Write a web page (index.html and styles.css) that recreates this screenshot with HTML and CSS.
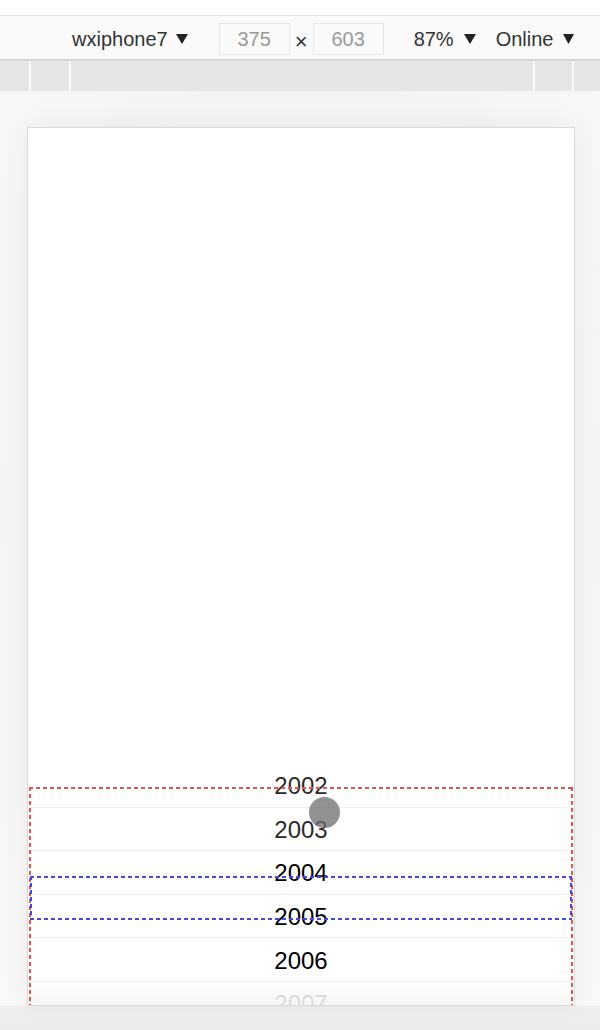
FILE: index.html
```html
<!DOCTYPE html>
<html>
<head>
<meta charset="utf-8">
<link rel="stylesheet" href="styles.css">
</head>
<body>
<div class="topgap"></div>
<div class="toolbar">
  <div class="sel device">wxiphone7 <svg class="tri" width="12" height="10" viewBox="0 0 12 10"><path d="M0 0H12L6 10Z"/></svg></div>
  <div class="dims">
    <div class="box">375</div>
    <span class="times">×</span>
    <div class="box">603</div>
  </div>
  <div class="sel zoomsel">87% <svg class="tri" width="12" height="10" viewBox="0 0 12 10"><path d="M0 0H12L6 10Z"/></svg></div>
  <div class="sel net">Online <svg class="tri" width="11" height="10" viewBox="0 0 11 10"><path d="M0 0H11L5.5 10Z"/></svg></div>
</div>
<div class="strip">
  <div class="seg s1"></div>
  <div class="seg s2"></div>
  <div class="seg s3"></div>
  <div class="seg s4"></div>
  <div class="seg s5"></div>
</div>
<div class="stage">
  <div class="sim">
    <div class="spacer"></div>
    <div class="picker">
      <div class="row first dim">2002</div>
      <div class="row dim">2003</div>
      <div class="row">2004</div>
      <div class="row">2005</div>
      <div class="row">2006</div>
      <div class="row faded">2007</div>
    </div>
    <div class="fade"></div>
    <div class="outline-red"></div>
    <div class="outline-blue"></div>
    <div class="touch"></div>
  </div>
</div>
<div class="bottom"></div>
</body>
</html>
```
FILE: styles.css
```css
* { box-sizing: border-box; }
html, body { margin: 0; padding: 0; }
body {
  width: 600px;
  height: 1030px;
  overflow: hidden;
  font-family: "Liberation Sans", Arial, sans-serif;
  background: #f6f6f6;
}
.topgap { height: 15px; background: #fff; }
.toolbar {
  height: 46px;
  background: #fafafa;
  border-top: 1px solid #e2e2e2;
  border-bottom: 2px solid #d4d4d4;
  display: flex;
  align-items: center;
  padding-left: 72px;
  padding-top: 3px;
  font-size: 20px;
  color: #333;
}
.sel { display: flex; align-items: center; gap: 8px; white-space: nowrap; }
.tri { fill: #222; }
.device { margin-right: 31px; }
.zoomsel { margin-left: 30px; gap: 10px; }
.net { margin-left: 20px; gap: 10px; }
.dims { display: flex; align-items: center; }
.box {
  width: 71px;
  height: 32px;
  border: 1px solid #e6e6e6;
  background: #fafafa;
  color: #999;
  display: flex;
  align-items: center;
  justify-content: center;
  font-size: 20px;
}
.times {
  width: 23px;
  text-align: center;
  font-size: 22px;
  color: #333;
  padding-top: 5px;
}
.strip {
  height: 30px;
  background: #fafafa;
  display: flex;
  gap: 2px;
}
.seg { background: #e6e6e6; height: 100%; }
.s1 { width: 29px; }
.s2 { width: 38px; }
.s3 { width: 462px; }
.s4 { width: 37px; }
.s5 { flex: 1; }
.stage {
  height: 915px;
  padding-top: 36px;
  padding-left: 27px;
  background: radial-gradient(ellipse at 50% 45%, #f3f3f3 60%, #f9f9f9 100%);
}
.sim {
  position: relative;
  width: 548px;
  height: 879px;
  background: #fff;
  border: 1px solid #dadada;
  box-shadow: 0 0 24px rgba(0, 0, 0, 0.05);
  overflow: hidden;
}
.spacer { height: 635px; }
.picker { display: flex; flex-direction: column; }
.row {
  height: 43.6px;
  border-top: 1px solid #f0f0f0;
  display: flex;
  align-items: center;
  justify-content: center;
  font-size: 24px;
  color: #000;
  padding-top: 2px;
}
.row.first { border-top: none; }
.row.dim { color: #2a2a2a; }
.row.faded { color: #c8c8c8; }
.fade {
  position: absolute;
  left: 0;
  right: 0;
  bottom: 0;
  height: 26px;
  background: linear-gradient(to bottom, rgba(255,255,255,0) 0%, rgba(240,240,240,0.6) 100%);
}
.outline-red {
  position: absolute;
  left: 1px;
  right: 1px;
  top: 659px;
  bottom: -10px;
  background:
    repeating-linear-gradient(90deg, #e5544b 0 4px, transparent 4px 7px) top left / 100% 2px no-repeat,
    repeating-linear-gradient(180deg, #e5544b 0 4px, transparent 4px 7px) top left / 2px 100% no-repeat,
    repeating-linear-gradient(180deg, #e5544b 0 4px, transparent 4px 7px) top right / 2px 100% no-repeat;
}
.outline-blue {
  position: absolute;
  left: 2px;
  right: 2px;
  top: 748px;
  height: 44px;
  background:
    repeating-linear-gradient(90deg, #4646e6 0 4px, transparent 4px 7px) top left / 100% 2px no-repeat,
    repeating-linear-gradient(90deg, #4646e6 0 4px, transparent 4px 7px) bottom left / 100% 2px no-repeat,
    repeating-linear-gradient(180deg, #4646e6 0 4px, transparent 4px 7px) top left / 2px 100% no-repeat,
    repeating-linear-gradient(180deg, #4646e6 0 4px, transparent 4px 7px) top right / 2px 100% no-repeat;
}
.touch {
  position: absolute;
  left: 281px;
  top: 669px;
  width: 31px;
  height: 31px;
  border-radius: 50%;
  background: rgba(110, 110, 110, 0.75);
}
.bottom {
  height: 24px;
  background: linear-gradient(to bottom, #efefef, #ececec);
}
```
